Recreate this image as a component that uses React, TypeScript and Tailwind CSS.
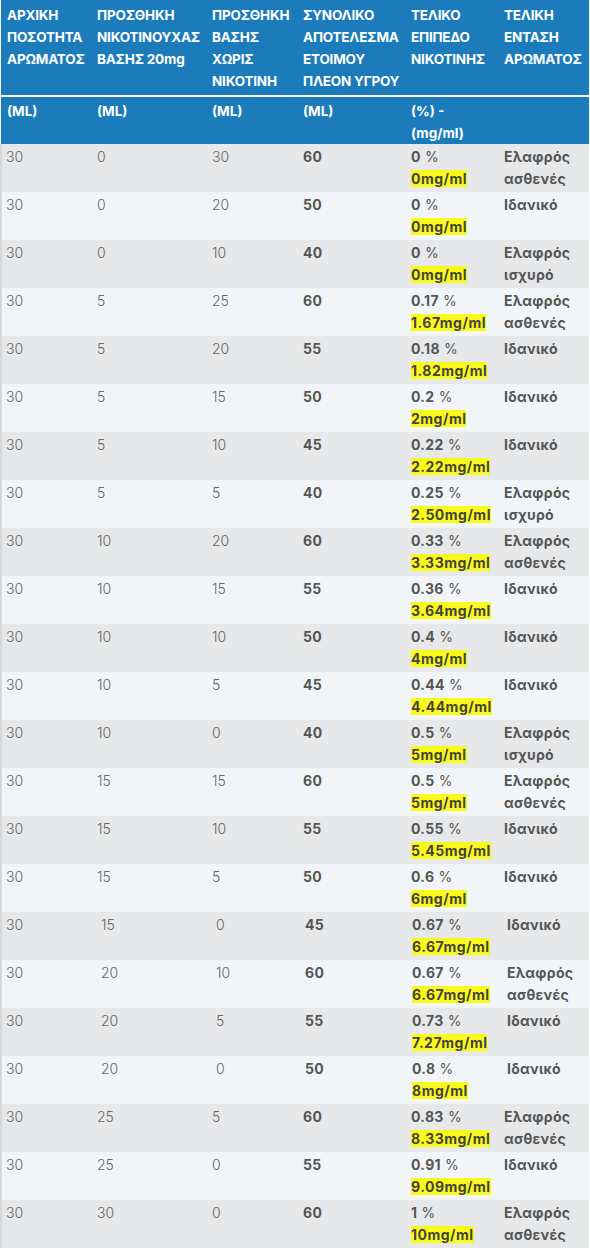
import React from "react";

type Row = [string, string, string, string, string, string, string];

const rows: Row[] = [
  ["30", "0", "30", "60", "0", "0", "Ελαφρός ασθενές"],
  ["30", "0", "20", "50", "0", "0", "Ιδανικό"],
  ["30", "0", "10", "40", "0", "0", "Ελαφρός ισχυρό"],
  ["30", "5", "25", "60", "0.17", "1.67", "Ελαφρός ασθενές"],
  ["30", "5", "20", "55", "0.18", "1.82", "Ιδανικό"],
  ["30", "5", "15", "50", "0.2", "2", "Ιδανικό"],
  ["30", "5", "10", "45", "0.22", "2.22", "Ιδανικό"],
  ["30", "5", "5", "40", "0.25", "2.50", "Ελαφρός ισχυρό"],
  ["30", "10", "20", "60", "0.33", "3.33", "Ελαφρός ασθενές"],
  ["30", "10", "15", "55", "0.36", "3.64", "Ιδανικό"],
  ["30", "10", "10", "50", "0.4", "4", "Ιδανικό"],
  ["30", "10", "5", "45", "0.44", "4.44", "Ιδανικό"],
  ["30", "10", "0", "40", "0.5", "5", "Ελαφρός ισχυρό"],
  ["30", "15", "15", "60", "0.5", "5", "Ελαφρός ασθενές"],
  ["30", "15", "10", "55", "0.55", "5.45", "Ιδανικό"],
  ["30", "15", "5", "50", "0.6", "6", "Ιδανικό"],
  ["30", "15", "0", "45", "0.67", "6.67", "Ιδανικό"],
  ["30", "20", "10", "60", "0.67", "6.67", "Ελαφρός ασθενές"],
  ["30", "20", "5", "55", "0.73", "7.27", "Ιδανικό"],
  ["30", "20", "0", "50", "0.8", "8", "Ιδανικό"],
  ["30", "25", "5", "60", "0.83", "8.33", "Ελαφρός ασθενές"],
  ["30", "25", "0", "55", "0.91", "9.09", "Ιδανικό"],
  ["30", "30", "0", "60", "1", "10", "Ελαφρός ασθενές"],
];

const headers = [
  "ΑΡΧΙΚΗ ΠΟΣΟΤΗΤΑ ΑΡΩΜΑΤΟΣ",
  "ΠΡΟΣΘΗΚΗ ΝΙΚΟΤΙΝΟΥΧΑΣ ΒΑΣΗΣ 20mg",
  "ΠΡΟΣΘΗΚΗ ΒΑΣΗΣ ΧΩΡΙΣ ΝΙΚΟΤΙΝΗ",
  "ΣΥΝΟΛΙΚΟ ΑΠΟΤΕΛΕΣΜΑ ΕΤΟΙΜΟΥ ΠΛΕΟΝ ΥΓΡΟΥ",
  "ΤΕΛΙΚΟ ΕΠΙΠΕΔΟ ΝΙΚΟΤΙΝΗΣ",
  "ΤΕΛΙΚΗ ΕΝΤΑΣΗ ΑΡΩΜΑΤΟΣ",
];

export default function App() {
  return (
    <div
      className="w-[590px] bg-white"
      style={{ fontFamily: 'Inter, "Noto Sans", sans-serif' }}
    >
      <table className="w-[588px] table-fixed border-collapse text-[14px] leading-[22px]">
        <colgroup>
          <col className="w-[90px]" />
          <col className="w-[115px]" />
          <col className="w-[91px]" />
          <col className="w-[108px]" />
          <col className="w-[93px]" />
          <col className="w-[91px]" />
        </colgroup>
        <thead className="bg-[#1b7bbb] text-white font-bold text-[13.5px]">
          <tr className="border-b-2 border-white">
            {headers.map((h, i) => (
              <th
                key={i}
                className="text-left align-top pl-[6px] pr-0 pt-[4px] pb-[3px] font-bold tracking-[-0.2px]"
              >
                {h}
              </th>
            ))}
          </tr>
          <tr>
            <th className="text-left align-top pl-[6px] pt-[3px] pb-0 h-[47px] font-bold">(ML)</th>
            <th className="text-left align-top pl-[6px] pt-[3px] pb-0 font-bold">(ML)</th>
            <th className="text-left align-top pl-[6px] pt-[3px] pb-0 font-bold">(ML)</th>
            <th className="text-left align-top pl-[6px] pt-[3px] pb-0 font-bold">(ML)</th>
            <th className="text-left align-top pl-[6px] pt-[3px] pb-0 font-bold">
              (%) -<br />(mg/ml)
            </th>
            <th className="text-left align-top pl-[6px] pt-[3px] pb-0"></th>
          </tr>
        </thead>
        <tbody>
          {rows.map((r, idx) => {
            const shifted = idx >= 16 && idx <= 19;
            return (
              <tr
                key={idx}
                className={idx % 2 === 0 ? "bg-[#e6e8ea]" : "bg-[#f1f5f8]"}
              >
                <td className="h-[48px] align-top border-l-2 border-[#d6d9dc] pl-[4px] pt-[2px] pb-[2px] font-light text-[#666]">
                  {r[0]}
                </td>
                <td
                  className={`align-top pt-[2px] pb-[2px] font-light text-[#666] ${
                    shifted ? "pl-[10px]" : "pl-[6px]"
                  }`}
                >
                  {r[1]}
                </td>
                <td
                  className={`align-top pt-[2px] pb-[2px] font-light text-[#666] ${
                    shifted ? "pl-[10px]" : "pl-[6px]"
                  }`}
                >
                  {r[2]}
                </td>
                <td
                  className={`align-top pt-[2px] pb-[2px] font-bold text-[#555] tracking-[0.3px] ${
                    shifted ? "pl-[8px]" : "pl-[6px]"
                  }`}
                >
                  {r[3]}
                </td>
                <td
                  className={`align-top pt-[2px] pb-[2px] text-[#555] whitespace-nowrap tracking-[0.3px] ${
                    shifted ? "pl-[7px]" : "pl-[6px]"
                  }`}
                >
                  <div>
                    <span className="font-bold">{r[4]}</span>{" "}
                    <span className="font-normal">%</span>
                  </div>
                  <div>
                    <span className="font-bold bg-[#f9f91a] text-[#444] tracking-[0.5px]">
                      {r[5]}mg/ml
                    </span>
                  </div>
                </td>
                <td
                  className={`align-top pt-[2px] pb-[2px] font-bold text-[#555] tracking-[0.3px] ${
                    shifted ? "pl-[9px]" : "pl-[6px]"
                  }`}
                >
                  {r[6]}
                </td>
              </tr>
            );
          })}
        </tbody>
      </table>
    </div>
  );
}
